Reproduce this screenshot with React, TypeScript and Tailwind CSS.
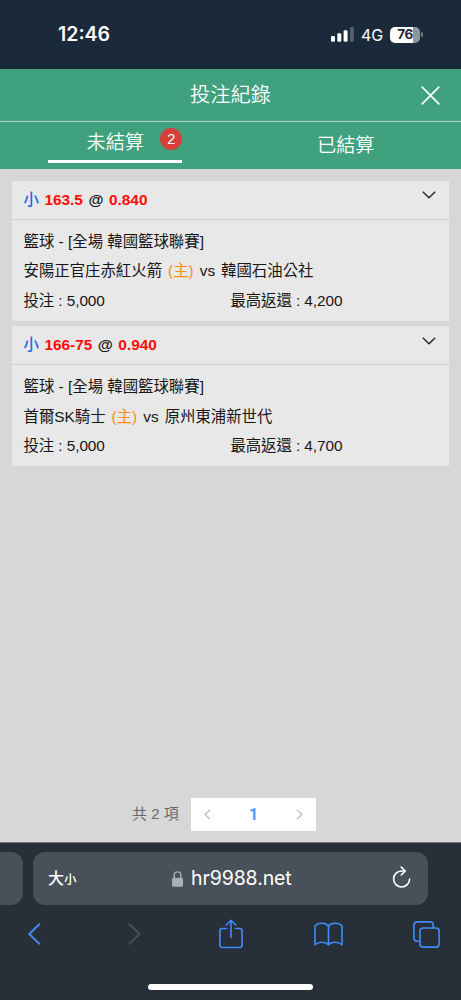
import { useState } from "react";
import { clsx } from "clsx";

const tabs = [
  { key: "open", label: "未結算", count: 2 },
  { key: "settled", label: "已結算", count: 0 },
];

const bets = [
  {
    id: 1,
    pick: "小",
    line: "163.5",
    odds: "0.840",
    league: "籃球 - [全場 韓國籃球聯賽]",
    home: "安陽正官庄赤紅火箭",
    away: "韓國石油公社",
    stake: "5,000",
    payout: "4,200",
  },
  {
    id: 2,
    pick: "小",
    line: "166-75",
    odds: "0.940",
    league: "籃球 - [全場 韓國籃球聯賽]",
    home: "首爾SK騎士",
    away: "原州東浦新世代",
    stake: "5,000",
    payout: "4,700",
  },
];

type Bet = (typeof bets)[number];

function StatusBar() {
  return (
    <div className="flex h-[69px] shrink-0 items-center bg-[#1b2a3a] pl-[58px] pr-[38px] font-['Inter',sans-serif] text-white">
      <span className="pt-px text-[19.5px] font-semibold leading-none">12:46</span>
      <div className="ml-auto flex items-center">
        <svg width="23" height="15" viewBox="0 0 23 15" fill="currentColor">
          <rect x="0" y="9" width="4" height="5.7" rx="1.2" />
          <rect x="6.3" y="6.2" width="4" height="8.5" rx="1.2" />
          <rect x="12.6" y="3.2" width="4" height="11.5" rx="1.2" />
          <rect x="18.9" y="0" width="4" height="14.7" rx="1.2" opacity="0.25" />
        </svg>
        <span className="ml-[7px] w-[22px] text-[16px] leading-none tracking-[-0.2px]">4G</span>
        <div className="ml-[7px] flex h-4 w-[30px] items-center justify-center rounded-[5px] bg-[linear-gradient(90deg,#fff_76%,#8d959d_76%)] text-[13.5px] font-bold leading-none tracking-[-0.4px] text-[#1b2a3a]">
          76
        </div>
        <div className="ml-px h-[5px] w-[2px] rounded-r-full bg-[#737d87]" />
      </div>
    </div>
  );
}

function BetCard({ bet }: { bet: Bet }) {
  return (
    <section className="bg-[#e8e8e8]">
      <div className="flex h-[39.4px] items-center justify-between border-b border-[#cfcfcf] pl-[11.5px] pr-[13px]">
        <h2 className="whitespace-pre text-[15.4px] font-bold leading-none">
          <span className="font-medium text-[#1668f5]">{bet.pick}</span>
          <span className="ml-[5.5px] text-[#fd0d05]">{bet.line}</span>
          <span className="mx-[5.5px]">@</span>
          <span className="text-[#fd0d05]">{bet.odds}</span>
        </h2>
        <svg
          className="mb-[9px]"
          width="14"
          height="8"
          viewBox="0 0 14 8"
          fill="none"
          stroke="#222"
          strokeWidth="1.3"
        >
          <path d="M0.8 0.8 7 6.8 13.2 0.8" />
        </svg>
      </div>
      <div className="h-[100.6px] pl-[11.5px] pt-[7px] text-[15.4px] leading-[29.3px]">
        <p>{bet.league}</p>
        <p>
          {bet.home}
          <span className="mx-[6px] text-[#ff8c13]">(主)</span>
          vs
          <span className="ml-[6px]">{bet.away}</span>
        </p>
        <div className="flex tracking-[-0.08px]">
          <span className="w-[207px]">投注 : {bet.stake}</span>
          <span>最高返還 : {bet.payout}</span>
        </div>
      </div>
    </section>
  );
}

function Pagination() {
  return (
    <div className="mb-[11px] mt-auto flex h-[33px] items-center pl-[132px] text-[15px]">
      <span className="w-[59px] text-[#68696d]">共 2 項</span>
      <div className="flex h-full w-[125px] items-center justify-between bg-white px-[13px]">
        <svg width="7" height="11" viewBox="0 0 7 11" fill="none" stroke="#bfc2ca" strokeWidth="1.5">
          <path d="M6 0.7 1.2 5.5 6 10.3" />
        </svg>
        <span className="font-['Roboto',sans-serif] text-[16px] font-bold text-[#459dff]">1</span>
        <svg width="7" height="11" viewBox="0 0 7 11" fill="none" stroke="#bfc2ca" strokeWidth="1.5">
          <path d="M1 0.7 5.8 5.5 1 10.3" />
        </svg>
      </div>
    </div>
  );
}

function BrowserBar() {
  return (
    <div className="flex h-[158px] shrink-0 flex-col border-t border-[#71767a] bg-[#272f39] pt-[9px]">
      {/* Address row */}
      <div className="flex h-[53px] gap-[10px]">
        <div className="w-[23px] rounded-r-[12px] bg-[#485059]" />
        <div className="flex w-[395px] items-center rounded-[12px] bg-[#485059] pl-[15px] pr-[17px] text-white">
          <span className="w-[124px] font-medium leading-none">
            <span className="text-[16px]">大</span>
            <span className="text-[12.5px]">小</span>
          </span>
          <svg width="11" height="16" viewBox="0 0 11 16">
            <path d="M2.2 7.5V4.2a3.3 3.3 0 0 1 6.6 0v3.3" fill="none" stroke="#a9adb8" strokeWidth="1.4" />
            <rect x="0" y="6.8" width="11" height="9" rx="1.6" fill="#a9adb8" />
          </svg>
          <span className="ml-2 pt-px font-['Inter',sans-serif] text-[19.5px] leading-none tracking-[-0.1px]">
            hr9988.net
          </span>
          <svg
            className="mb-1 ml-auto"
            width="19"
            height="22"
            viewBox="0 0 19 22"
            fill="none"
            stroke="currentColor"
            strokeWidth="1.6"
            strokeLinecap="round"
            strokeLinejoin="round"
          >
            <path d="M12.6 5H9.500A8 8 0 1 0 17.600 13" />
            <path d="M9.200 1.100 13.200 5 9.200 9" />
          </svg>
        </div>
      </div>

      {/* Toolbar */}
      <div className="-ml-[15px] grid h-[58px] w-[490px] grid-cols-5 place-items-center text-[#428cf8]">
        <svg width="13" height="22" viewBox="0 0 13 22" fill="none" stroke="currentColor" strokeWidth="1.9" strokeLinecap="round" strokeLinejoin="round">
          <path d="M11.3 1.2 1.2 11 11.3 20.8" />
        </svg>
        <svg className="ml-1" width="13" height="22" viewBox="0 0 13 22" fill="none" stroke="#4c535d" strokeWidth="1.8" strokeLinecap="round" strokeLinejoin="round">
          <path d="M1.2 1.2 11.500 11 1.2 20.8" />
        </svg>
        <svg className="-mt-px ml-px" width="24" height="30" viewBox="0 0 24 30" fill="none" stroke="currentColor" strokeWidth="1.6" strokeLinecap="round" strokeLinejoin="round">
          <path d="M7.5 9.5H3.2A2.4 2.4 0 0 0 .9 11.9v14.2a2.4 2.4 0 0 0 2.3 2.4h17.6a2.4 2.4 0 0 0 2.3-2.4V11.900a2.4 2.4 0 0 0-2.3-2.4h-4.300" />
          <path d="M12 18.500V1.500M7.300 6 12 1.300 16.700 6" />
        </svg>
        <svg width="29" height="24" viewBox="0 0 29 24" fill="none" stroke="currentColor" strokeWidth="1.6" strokeLinejoin="round">
          <path d="M14.500 4C12 .5 4 .2 1 4v18.800c3.500-3.500 10.500-3.300 13.500 0 3-3.300 10-3.500 13.500 0V4C25 .2 17 .5 14.500 4Z" />
          <path d="M14.500 4v18.800" />
        </svg>
        <svg width="27" height="27" viewBox="0 0 27 27" fill="none" stroke="currentColor" strokeWidth="1.6">
          <path d="M7 20.200H4.100A3.200 3.200 0 0 1 .9 17V4.100A3.200 3.200 0 0 1 4.100.9H17a3.200 3.200 0 0 1 3.200 3.200V7" />
          <rect x="7" y="7" width="19.100" height="19.100" rx="3.200" />
        </svg>
      </div>
      <div className="mx-auto mt-[21px] h-[6px] w-[165px] rounded-full bg-white" />
    </div>
  );
}

export default function App() {
  const [active, setActive] = useState("open");

  return (
    <div className="flex h-[1000px] w-[461px] flex-col overflow-hidden bg-[#d7d7d7] font-['Liberation_Sans','Noto_Sans_CJK_TC',sans-serif] text-[#161616]">
      <StatusBar />

      <header className="shrink-0 bg-[#40a17f] text-white">
        <div className="flex h-[53px] items-center border-b border-[#b7d3c7] pl-10 pr-[21px]">
          <h1 className="flex-1 pt-px text-center text-[20.2px] font-[350] leading-none">投注紀錄</h1>
          <button aria-label="關閉">
            <svg width="19" height="19" viewBox="0 0 19 19" fill="none" stroke="currentColor" strokeWidth="1.7">
              <path d="M.7.7 18.300 18.300M18.300.7.7 18.300" />
            </svg>
          </button>
        </div>
        <nav className="flex h-[47px]">
          {tabs.map((tab) => (
            <button
              key={tab.key}
              onClick={() => setActive(tab.key)}
              className="flex flex-1 justify-center text-[19.2px] font-[350] leading-none"
            >
              <span
                className={clsx(
                  "relative flex items-center justify-center",
                  active === tab.key
                    ? "h-[41px] w-[134px] border-b-[3px] border-white pt-1"
                    : "h-[47px] pt-px"
                )}
              >
                {tab.label}
                {tab.count > 0 && (
                  <span className="absolute right-0 top-[6px] flex size-[22px] items-center justify-center rounded-full bg-[#d7403a] text-[14.5px] font-normal">
                    {tab.count}
                  </span>
                )}
              </span>
            </button>
          ))}
        </nav>
      </header>

      <main className="flex flex-1 flex-col">
        <div className="mx-3 mt-[11.8px] flex flex-col gap-[5.2px]">
          {bets.map((bet) => (
            <BetCard key={bet.id} bet={bet} />
          ))}
        </div>
        <Pagination />
      </main>

      <BrowserBar />
    </div>
  );
}
